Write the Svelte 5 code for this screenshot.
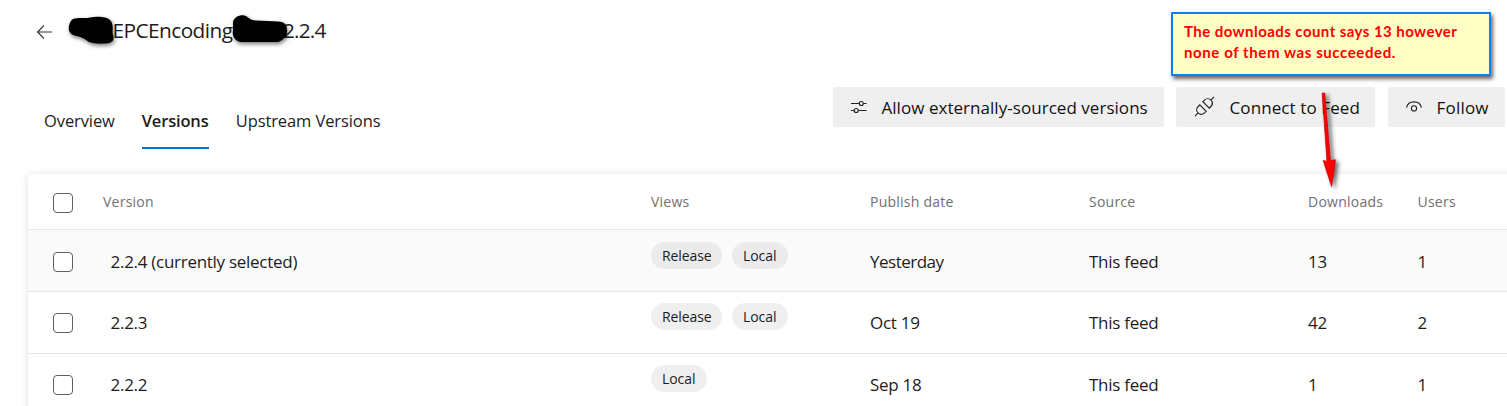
<script>
  const tabs = ['Overview', 'Versions', 'Upstream Versions'];
  const active = 'Versions';
  const columns = ['Views', 'Publish date', 'Source', 'Downloads', 'Users'];
  const rows = [
    { version: '2.2.4 (currently selected)', views: ['Release', 'Local'], date: 'Yesterday', source: 'This feed', downloads: 13, users: 1, selected: true },
    { version: '2.2.3', views: ['Release', 'Local'], date: 'Oct 19', source: 'This feed', downloads: 42, users: 2, selected: false },
    { version: '2.2.2', views: ['Local'], date: 'Sep 18', source: 'This feed', downloads: 1, users: 1, selected: false }
  ];
</script>

<main>
  <header>
    <svg class="back" width="18" height="16" viewBox="0 0 18 16">
      <path d="M16 8H1.5M8 1.5L1.5 8L8 14.5" />
    </svg>
    <h1><span class="name">EPCEncoding</span><span class="number">2.2.4</span></h1>
    <svg class="redaction" width="240" height="44" viewBox="0 0 240 44">
      <path d="M13 11C20 9 25 11 30 9.5C38 8 47 9 50 12C53 15 53 20 52.5 25C55 31 53 34 49 35C44 36 34 36 29 34C25 31 22 29 17 28C10 27 8 23 9 18C10 14 11 12 13 11Z" />
      <path d="M173 14C174 9 181 6 186 8C190 11 192 12.5 196 12.5L218 13.5C225 14 227 17 227 22C228 27 224 32 218 34L180 34C174 32 172 27 173 22Z" />
    </svg>
  </header>

  <div class="toolbar">
    <nav>
      {#each tabs as tab}
        <a class:active={tab === active}>{tab}</a>
      {/each}
    </nav>
    <div class="actions">
      <button class="allow">
        <svg width="16" height="14" viewBox="0 0 16 14">
          <path d="M0 3.5H8.3M12.3 3.5H15.5M0 10.5H3.2M7.2 10.5H15.5" />
          <circle cx="10.3" cy="3.5" r="2" /><circle cx="5.2" cy="10.5" r="2" />
        </svg>
        Allow externally-sourced versions
      </button>
      <button class="connect">
        <svg width="22" height="22" viewBox="0 0 22 22">
          <g transform="translate(10.5 10.5) rotate(-45)">
            <path d="M-13.5 0H-9M-2.2 -4.5H-4.5C-10.6 -4.5 -10.6 4.5 -4.5 4.5H-2.2ZM2.2 -4.5H4.5C10.6 -4.5 10.6 4.5 4.5 4.5H2.2ZM9 0H13.5" />
          </g>
        </svg>
        Connect to Feed
      </button>
      <button class="follow">
        <svg width="16" height="12" viewBox="0 0 16 12">
          <path d="M.6 6.6C2 -1 14 -1 15.4 6.6" /><circle cx="8" cy="7.4" r="2.6" />
        </svg>
        Follow
      </button>
    </div>
  </div>

  <section>
    <div class="row head">
      <i class="box"></i>
      <span>Version</span>
      {#each columns as column}<span>{column}</span>{/each}
    </div>
    {#each rows as row}
      <div class="row" class:selected={row.selected}>
        <i class="box"></i>
        <span class="version">{row.version}</span>
        <div class="views">{#each row.views as view}<b>{view}</b>{/each}</div>
        <span class:date={row.selected}>{row.date}</span>
        <span>{row.source}</span>
        <span>{row.downloads}</span>
        <span>{row.users}</span>
      </div>
    {/each}
  </section>

  <aside>The downloads count says 13 however<br /><span>none of them was succeeded.</span></aside>
  <svg class="arrow" width="40" height="110" viewBox="0 0 40 110">
    <path d="M12.2 9.2L14.8 9L20.4 76.8L25.4 75.8L21.6 102.5L13.2 76.4L17 77.4Z" />
  </svg>
</main>

<style>
  :global(body) { background: #fff; }
  main {
    position: relative;
    width: 1507px;
    height: 406px;
    overflow: hidden;
    box-sizing: border-box;
    font-family: 'Open Sans', 'Noto Sans', sans-serif;
    color: #1c1c1c;
  }
  header {
    position: relative;
    height: 62px;
    display: flex;
    align-items: center;
    padding-left: 36px;
  }
  svg { fill: none; stroke: #222; stroke-width: 1.1; flex: none; }
  .back { margin-top: 2px; stroke: #333; }
  h1 {
    display: flex;
    margin: 0 0 3px 58.5px;
    font-size: 20.8px;
    line-height: 28px;
    font-weight: 400;
    letter-spacing: -0.55px;
  }
  .number { margin-left: 50.5px; letter-spacing: -0.8px; }
  .redaction {
    position: absolute;
    left: 60px;
    top: 8px;
    fill: #000;
    stroke: none;
    filter: drop-shadow(1px 2px 2px #0008);
  }
  .redaction path { fill: #000; }

  .toolbar {
    height: 62px;
    margin-top: 25px;
    display: flex;
    justify-content: space-between;
    padding: 0 2px 0 44px;
  }
  nav { display: flex; gap: 27px; }
  nav a {
    box-sizing: border-box;
    height: 62px;
    padding-top: 6px;
    font-size: 16.5px;
    line-height: 56px;
    letter-spacing: -0.1px;
  }
  nav a.active {
    font-weight: 600;
    width: 67px;
    letter-spacing: -0.17px;
    border-bottom: 2px solid #0078d4;
  }
  .actions { display: flex; height: 40px; }
  button {
    display: flex;
    align-items: center;
    border: 0;
    border-radius: 2px;
    padding: 0;
    background: #efefef;
    color: #111;
    font-family: inherit;
    font-size: 17px;
    letter-spacing: 0.04px;
    white-space: nowrap;
  }
  .allow { width: 331px; padding-left: 18px; gap: 14.5px; margin-right: 12px; }
  .connect { width: 199px; padding-left: 18px; gap: 13.5px; margin-right: 13px; letter-spacing: 0.1px; }
  .follow { width: 117px; padding-left: 18px; gap: 14.5px; letter-spacing: 0.2px; }

  section {
    margin: 25px -20px 0 28px;
    height: 260px;
    border-radius: 4px 0 0 0;
    box-shadow: 0 1px 9px rgba(0, 0, 0, 0.13);
    background: #fff;
  }
  .row {
    box-sizing: border-box;
    height: 62px;
    display: grid;
    grid-template-columns: 50px 548px 219px 219px 219px 109.5px 1fr;
    align-items: center;
    padding-left: 25px;
    border-bottom: 1px solid #e6e6e6;
    font-size: 17px;
    letter-spacing: -0.27px;
  }
  .head {
    height: 56px;
    font-size: 14px;
    letter-spacing: 0.24px;
    color: #707070;
  }
  .head .box { margin-top: 3px; }
  .selected { background: #fafafa; padding-top: 1px; }
  .selected .box { margin-top: 1px; }
  .version { padding-left: 7.5px; letter-spacing: -0.28px; }
  .date { letter-spacing: -0.5px; }
  .box {
    box-sizing: border-box;
    width: 20px;
    height: 20px;
    border: 1px solid #606060;
    border-radius: 4px;
    background: #fff;
  }
  .views { display: flex; gap: 10px; align-self: start; margin-top: 11px; }
  b {
    box-sizing: border-box;
    height: 27px;
    width: 56px;
    padding: 1px 0 0 11px;
    border-radius: 14px;
    background: #efefef;
    font-size: 14px;
    line-height: 26px;
    font-weight: 400;
    letter-spacing: -0.08px;
  }
  b:not(:last-child) { width: 71px; }
  .selected b { background: #ebebeb; }

  aside {
    position: absolute;
    left: 1171px;
    top: 12px;
    box-sizing: border-box;
    width: 320px;
    height: 64px;
    padding: 7px 11px;
    border: 2px solid #0a80f5;
    background: #ffffc5;
    box-shadow: 2px 3px 4px rgba(0, 0, 0, 0.6);
    color: #f00;
    font: 700 15px/21px Lato, 'Open Sans', sans-serif;
    letter-spacing: 0.44px;
    white-space: nowrap;
  }
  aside span { letter-spacing: 0.59px; }
  .arrow {
    position: absolute;
    left: 1310px;
    top: 84px;
    overflow: visible;
    filter: drop-shadow(3px 2px 2px #0009);
  }
  .arrow path { fill: #f00; stroke: #d00000; stroke-width: 0.8; }
</style>
